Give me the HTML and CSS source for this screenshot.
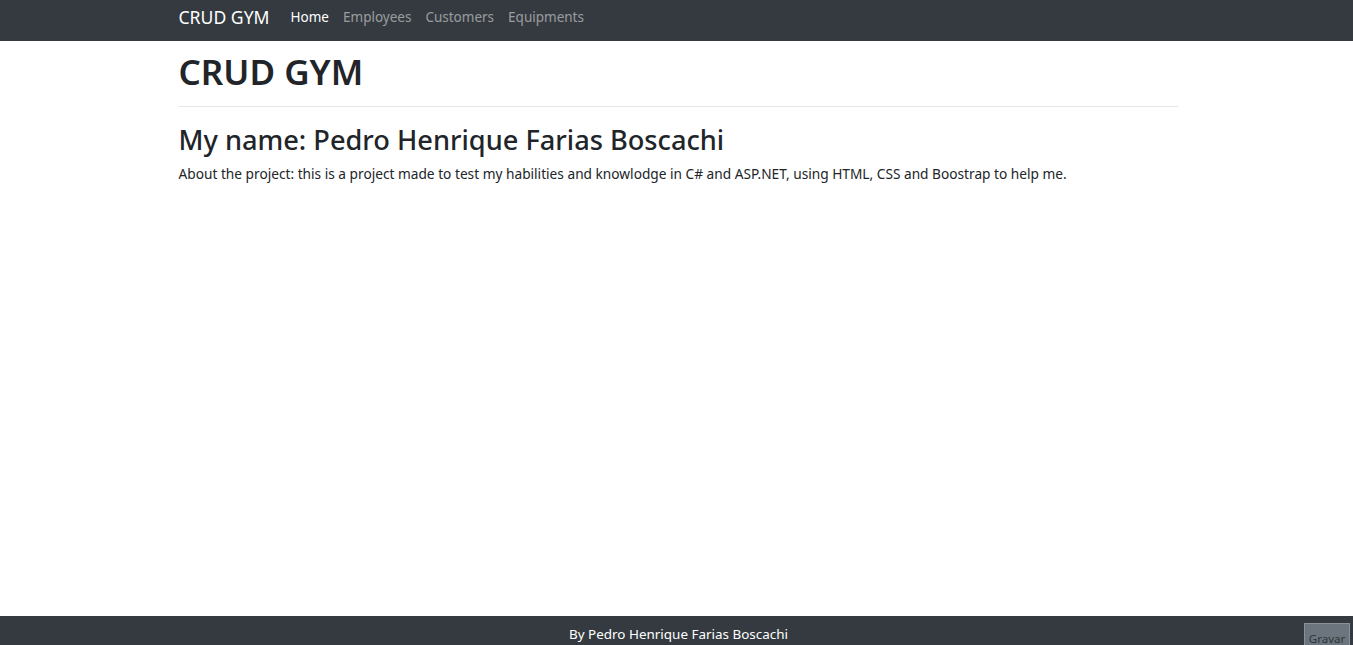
FILE: index.html
```html
<!DOCTYPE html>
<html>
<head>
<meta charset="utf-8">
<title>CRUD GYM</title>
<link rel="stylesheet" href="styles.css">
</head>
<body>
<header class="navbar">
  <div class="container nav-inner">
    <a class="brand" href="#">CRUD GYM</a>
    <ul class="nav-links">
      <li><a class="active" href="#">Home</a></li>
      <li><a href="#">Employees</a></li>
      <li><a href="#">Customers</a></li>
      <li><a href="#">Equipments</a></li>
    </ul>
  </div>
</header>
<main class="container main">
  <h1 class="title">CRUD GYM</h1>
  <hr class="divider">
  <h2 class="subtitle">My name: Pedro Henrique Farias Boscachi</h2>
  <p class="about">About the project: this is a project made to test my habilities and knowlodge in C# and ASP.NET, using HTML, CSS and Boostrap to help me.</p>
</main>
<footer class="footer">
  <span class="footer-text">By Pedro Henrique Farias Boscachi</span>
  <button class="gravar">Gravar</button>
</footer>
</body>
</html>
```
FILE: styles.css
```css
* { box-sizing: border-box; }
html, body { margin: 0; padding: 0; height: 100%; }
body {
  font-family: "Noto Sans", "Open Sans", sans-serif;
  color: #212529;
  background: #fff;
  display: flex;
  flex-direction: column;
  min-height: 645px;
}
.container {
  width: 1002px;
  padding-left: 3px;
  margin: 0 auto;
}
.navbar {
  background: #343a40;
  height: 41px;
  flex: none;
}
.nav-inner {
  display: flex;
  align-items: flex-start;
  padding-top: 5px;
  height: 100%;
}
.brand {
  color: #fff;
  text-decoration: none;
  font-size: 17.6px;
  line-height: 24px;
  margin-right: 21px;
}
.nav-links {
  display: flex;
  list-style: none;
  margin: 0;
  padding: 0;
  gap: 14px;
}
.nav-links a {
  color: rgba(255,255,255,0.5);
  text-decoration: none;
  font-size: 13.5px;
  line-height: 22px;
}
.nav-links a.active { color: #fff; }
.main { flex: 1; }
.title {
  font-size: 35px;
  font-weight: 600;
  margin: 10px 0 0;
  line-height: 1.2;
}
.divider {
  border: 0;
  border-top: 1px solid #e5e5e5;
  margin: 13px 0 17px;
}
.subtitle {
  font-size: 27.2px;
  font-weight: 500;
  margin: 0 0 7px;
  line-height: 1.2;
}
.about {
  font-size: 13.7px;
  margin: 0;
}
.footer {
  background: #343a40;
  height: 29px;
  flex: none;
  position: relative;
  display: flex;
  justify-content: center;
  align-items: flex-start;
  padding-top: 9px;
}
.footer-text {
  color: #fff;
  font-size: 13.45px;
  line-height: 18px;
  margin-left: 4px;
}
.gravar {
  position: absolute;
  right: 3px;
  top: 7px;
  width: 46px;
  height: 26px;
  background: #6c757d;
  border: 1px solid #8a9096;
  color: #2f3439;
  font-family: "Noto Sans", sans-serif;
  font-size: 11.5px;
  padding: 0;
  padding-top: 4px;
}
```
